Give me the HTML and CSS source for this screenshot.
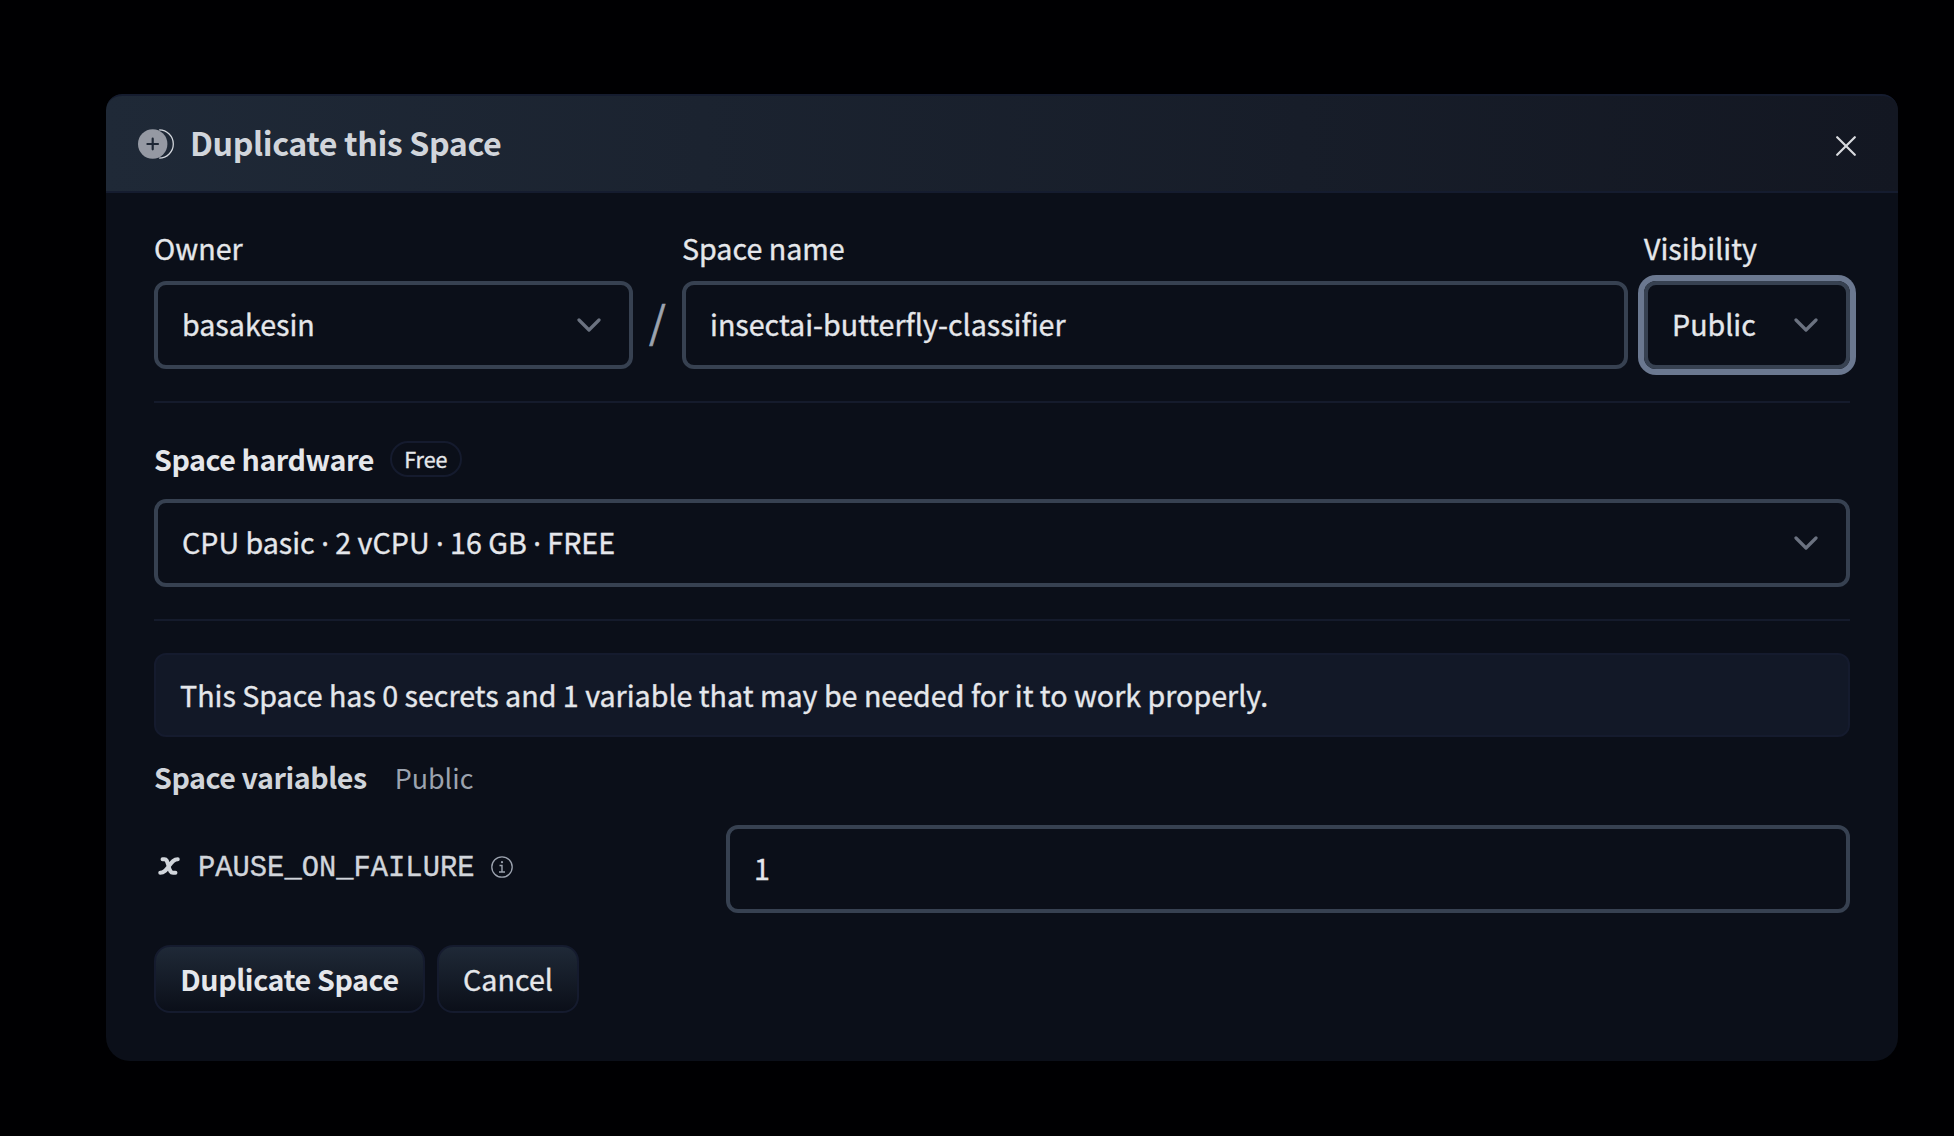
FILE: index.html
```html
<!DOCTYPE html>
<html lang="en">
<head>
<meta charset="utf-8">
<title>Duplicate this Space</title>
<link rel="stylesheet" href="styles.css">
</head>
<body>
<main class="modal">
  <header class="modal-header">
    <svg class="dup-icon" viewBox="0 0 36 30" width="36" height="30">
      <circle cx="14.7" cy="15" r="14.7" fill="#9599a3"/>
      <path d="M14.7 9.700v10.600M9.400 15h10.600" stroke="#1e2735" stroke-width="2.2" stroke-linecap="round"/>
      <path d="M21.200 .900a14.100 14.100 0 0 1 0 28.200" fill="none" stroke="#d1d5db" stroke-width="1.3"/>
    </svg>
    <h1 class="title">Duplicate this Space</h1>
    <svg class="close" viewBox="0 0 20 20" width="20" height="20"><path d="M1.2 1.2l17.6 17.6M18.8 1.2L1.2 18.8" stroke="#d8dade" stroke-width="2.2" stroke-linecap="round"/></svg>
  </header>
  <form class="body">
    <div class="row">
      <div class="field owner">
        <label class="label">Owner</label>
        <div class="control"><span class="value">basakesin</span><svg class="chevron" viewBox="0 0 24 14" width="24" height="14"><path d="M2 2l10 10L22 2"/></svg></div>
      </div>
      <div class="slash">/</div>
      <div class="field name">
        <label class="label">Space name</label>
        <div class="control"><span class="value">insectai-butterfly-classifier</span></div>
      </div>
      <div class="field visibility">
        <label class="label">Visibility</label>
        <div class="control focused"><span class="value">Public</span><svg class="chevron" viewBox="0 0 24 14" width="24" height="14"><path d="M2 2l10 10L22 2"/></svg></div>
      </div>
    </div>
    <div class="divider"></div>
    <div class="hardware-head"><span class="strong">Space hardware</span><span class="pill">Free</span></div>
    <div class="control"><span class="value">CPU basic <span class="dot">·</span> 2 vCPU <span class="dot">·</span> 16 GB <span class="dot">·</span> FREE</span><svg class="chevron" viewBox="0 0 24 14" width="24" height="14"><path d="M2 2l10 10L22 2"/></svg></div>
    <div class="divider"></div>
    <div class="alert"><span>This Space has 0 secrets and 1 variable that may be needed for it to work properly.</span></div>
    <div class="variables-head"><span class="strong dim">Space variables</span><span class="public">Public</span></div>
    <div class="variable">
      <div class="variable-name">
        <svg class="x-icon" viewBox="0 0 22 18" width="22" height="18"><path d="M4.500 2.200H6.500C9 2.200 9.300 5 10.500 9C11.700 13 12.300 15.800 15 15.800H17.500M19.800 2.200C15.500 2.200 13.500 5.500 11 9C8.500 12.500 6.500 15.800 2.200 15.800" fill="none" stroke="#d1d5db" stroke-width="3.900" stroke-linecap="round"/></svg>
        <span class="mono">PAUSE_ON_FAILURE</span>
        <svg class="info" viewBox="0 0 22 22" width="22" height="22"><circle cx="11" cy="11" r="10.200" fill="none" stroke="#9ca3af" stroke-width="1.300"/><path d="M8.500 9.500H11v6.500M8 16h6" fill="none" stroke="#9ca3af" stroke-width="1.400"/><circle cx="11" cy="6.200" r="1.100" fill="#9ca3af"/></svg>
      </div>
      <div class="control"><span class="value">1</span></div>
    </div>
    <div class="actions">
      <button type="button" class="btn primary">Duplicate Space</button>
      <button type="button" class="btn cancel">Cancel</button>
    </div>
  </form>
</main>
</body>
</html>
```
FILE: styles.css
```css
* { box-sizing: border-box; }
body {
  margin: 0;
  height: 1136px;
  padding: 94px 56px 0 106px;
  background: #000002;
  color: #e5e7eb;
  font: 28.65px/48px "Noto Sans CJK JP", "Noto Sans CJK SC", sans-serif;
  -webkit-text-stroke: 0.35px currentColor;
  white-space: nowrap;
  overflow: hidden;
}
.modal {
  width: 1792px;
  height: 967px;
  border-radius: 16px 16px 24px 24px;
  background: #0b0f19;
  overflow: hidden;
}
.modal-header {
  display: flex;
  align-items: center;
  height: 99px;
  padding: 0 42px 0 32px;
  border-top: 2px solid #151c2f;
  border-bottom: 2px solid #151c2f;
  border-radius: 16px 16px 0 0;
  background: linear-gradient(90deg, #1f2937, #131722);
}
.title {
  margin: -3px auto 0 16px;
  color: #d1d5db;
  font-size: 32.2px;
  font-weight: 600;
  letter-spacing: -0.4px;
  -webkit-text-stroke: 0;
}
.close { margin-top: 5px; }
.body { padding: 32px 48px 0; }
.row { display: flex; }
.label { display: block; height: 56px; line-height: 46px; }
.value { line-height: 46px; margin-bottom: 2px; }
.owner { width: 479px; }
.slash {
  width: 49px;
  padding-top: 70px;
  text-align: center;
  color: #9ca3af;
  font-size: 43px;
  -webkit-text-stroke-width: 0.6px;
}
.name { width: 946px; margin-right: 16px; }
.visibility { width: 206px; }
.control {
  display: flex;
  align-items: center;
  justify-content: space-between;
  height: 88px;
  padding: 0 28px 0 24px;
  border: 4px solid #374151;
  border-radius: 12px;
}
.focused { box-shadow: 0 0 0 6px #6b7890; }
.chevron path {
  fill: none;
  stroke: #6b7280;
  stroke-width: 3.2;
  stroke-linecap: round;
  stroke-linejoin: round;
}
.dot { font-family: "Noto Sans", sans-serif; line-height: 1; }
.divider { height: 2px; margin: 32px 0; background: #151b2c; }
.hardware-head {
  display: flex;
  align-items: center;
  gap: 16px;
  height: 48px;
  margin-bottom: 16px;
}
.strong { font-weight: 600; letter-spacing: -0.45px; -webkit-text-stroke: 0; }
.dim { color: #d1d5db; }
.pill {
  width: 72px;
  height: 36px;
  border: 2px solid #151b2e;
  border-radius: 18px;
  font-size: 21.5px;
  line-height: 32px;
  text-align: center;
}
.alert {
  display: flex;
  align-items: center;
  height: 84px;
  padding-left: 24px;
  border: 2px solid #151b2e;
  border-radius: 12px;
  background: #121827;
}
.variables-head { display: flex; align-items: baseline; gap: 28px; height: 48px; margin: 16px 0 24px; }
.public { color: #9ca3af; font-size: 26.9px; -webkit-text-stroke: 0; }
.variable { display: grid; grid-template-columns: 572px 1124px; }
.variable-name { display: flex; align-items: center; height: 84px; padding-left: 4px; }
.x-icon { margin-bottom: 3px; }
.mono {
  margin: 4px 16px 0 18px;
  color: #d1d5db;
  font-family: "Liberation Mono", monospace;
  font-size: 28.8px;
}
.actions { display: flex; gap: 12px; margin-top: 32px; }
.btn {
  height: 68px;
  padding: 0;
  border: 2px solid #151b2e;
  border-radius: 16px;
  background: linear-gradient(#1f2937, #0b0f19);
  color: #e5e7eb;
  font: inherit;
}
.primary {
  width: 271px;
  font-weight: 600;
  letter-spacing: -0.4px;
  -webkit-text-stroke: 0;
}
.cancel { width: 142px; }
```
